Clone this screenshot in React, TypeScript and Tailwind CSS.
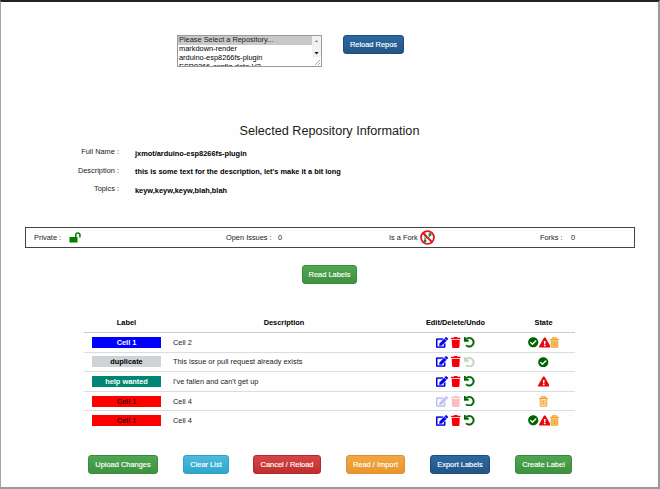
import React from "react";
import { FaEdit, FaTrash, FaUndo, FaCheckCircle, FaExclamationTriangle, FaRegTrashAlt } from "react-icons/fa";

function Btn({ label, className }: { label: string; className: string }) {
  return (
    <button
      className={`h-[19px] shrink-0 rounded-[3px] border text-center text-[7.45px] leading-[17px] whitespace-nowrap text-white [-webkit-text-stroke:0.15px_white] ${className}`}
    >
      {label}
    </button>
  );
}

const green = "bg-linear-to-b from-[#4fa751] to-[#3d913f] border-[#3c8a3e]";
const blue = "bg-linear-to-b from-[#2c69a3] to-[#235586] border-[#1f4c79]";

function NoFork() {
  return (
    <svg viewBox="0 0 30 30" className="h-[15px] w-[15px]" fill="none">
      <path d="M10 21V9M20 8v4c0 4-10 2-10 7" stroke="#15803d" strokeWidth="1.6" />
      <circle cx="10" cy="22" r="3" fill="#15803d" />
      <circle cx="10" cy="9" r="2" fill="#15803d" />
      <circle cx="20" cy="9" r="3" fill="#15803d" />
      <circle cx="15" cy="15" r="12.9" stroke="#e0161b" strokeWidth="3.6" />
      <path d="M6 6l18 18" stroke="#e0161b" strokeWidth="3.6" />
    </svg>
  );
}

type Row = {
  label: string;
  color: string;
  desc: string;
  edit: boolean;
  undo: boolean;
  state: string[];
};

const rows: Row[] = [
  { label: "Cell 1", color: "bg-[#0000ff] text-white", desc: "Cell 2", edit: true, undo: true, state: ["ok", "warn", "faded"] },
  { label: "duplicate", color: "bg-[#cfd3d7] text-black", desc: "This issue or pull request already exists", edit: true, undo: false, state: ["ok"] },
  { label: "help wanted", color: "bg-[#008672] text-white", desc: "I've fallen and can't get up", edit: true, undo: true, state: ["warn"] },
  { label: "Cell 1", color: "bg-[#ff0000] text-[#3c0000]", desc: "Cell 4", edit: false, undo: true, state: ["del"] },
  { label: "Cell 1", color: "bg-[#ff0000] text-[#3c0000]", desc: "Cell 4", edit: true, undo: true, state: ["ok", "warn", "faded"] },
];

function StateIcon({ kind }: { kind: string }) {
  if (kind === "ok") return <FaCheckCircle className="h-[10.5px] w-[10.5px] shrink-0 text-[#006400]" />;
  if (kind === "warn") return <FaExclamationTriangle className="h-[11px] w-[11.5px] shrink-0 text-[#e8050c]" />;
  return (
    <svg viewBox="0 0 18 22" className="h-[11px] w-[9px] shrink-0" fill="none" stroke="#f59a23">
      <path d="M2.5 5h13v15.5h-13z" fill={kind === "faded" ? "#fbc97e" : "#fee6c2"} strokeWidth="1.8" />
      <path d="M0 4.5h18M5.5 3.5V1.5h7v2" strokeWidth="2.2" />
      <path d="M6 8v10M9 8v10M12 8v10" strokeWidth="1.5" />
    </svg>
  );
}

function Info({ name, value }: { name: string; value: string }) {
  return (
    <div className="flex h-[18.5px]">
      <div className="w-[118px] text-right">{name} :</div>
      <div className="ml-[16px] pt-[1.5px] font-bold text-black">{value}</div>
    </div>
  );
}

export default function App() {
  return (
    <div
      className="h-[489px] w-[660px] overflow-hidden border-t-2 border-r-2 border-b-2 border-l border-t-[#222] border-r-[#999] border-b-[#999] border-l-[#a5a5a5] bg-[#fefefe] text-[7.4px] leading-[9px] text-[#1a1a1a]"
      style={{ fontFamily: '"Liberation Sans", Arial, sans-serif' }}
    >
      <div className="flex h-[118px] pt-[33px] pl-[176px]">
        <div className="flex h-[32px] w-[145px] overflow-hidden border border-[#999] bg-white">
          <div className="h-[30px] flex-1 overflow-hidden text-black">
            <div className="h-[9px] bg-[#c8c8c8] pl-px leading-[8px] text-[#222]">Please Select a Repository...</div>
            <div className="h-[9px] pl-px leading-[8px]">markdown-render</div>
            <div className="h-[9px] pl-px leading-[8px]">arduino-esp8266fs-plugin</div>
            <div className="h-[9px] pl-px leading-[8px]">ESP8266-config-data-V2</div>
          </div>
          <div className="flex w-[9px] flex-col items-center bg-[#f1f1f1]">
            <svg viewBox="0 0 9 30" className="h-[30px] w-[9px]">
              <path d="M2.8 6L4.5 4.2 6.2 6z" fill="#777" />
              <path d="M2.3 16h4.4L4.5 18.4z" fill="#222" />
              <path d="M0 21h9v9H0z" fill="#fff" />
              <path d="M3 29l5-5M6 29l2-2" stroke="#888" strokeWidth=".7" />
            </svg>
          </div>
        </div>
        <Btn label="Reload Repos" className={`ml-[21px] w-[61px] ${blue}`} />
      </div>

      <h1 className="h-[27px] text-center text-[12.65px] leading-[22px] text-[#1a1a1a]">Selected Repository Information</h1>

      <section className="h-[80px]">
        <Info name="Full Name" value="jxmot/arduino-esp8266fs-plugin" />
        <Info name="Description" value="this is some text for the description, let's make it a bit long" />
        <Info name="Topics" value="keyw,keyw,keyw,blah,blah" />
      </section>

      <section className="ml-[24px] flex h-[21px] w-[610px] items-center border border-[#444] pl-[8px]">
        <div className="flex w-[192px] items-center">
          <span className="w-[35px]">Private :</span>
          <svg viewBox="0 0 24 22" className="h-[11px] w-[12px]">
            <path d="M1 10h16v11H1z" fill="#008000" />
            <path d="M13.5 11V6a4.2 4.2 0 0 1 8.4 0v5" fill="none" stroke="#008000" strokeWidth="3" />
          </svg>
        </div>
        <div className="flex w-[163px]"><span className="w-[52px]">Open Issues :</span><span>0</span></div>
        <div className="flex w-[151px] items-center"><span className="w-[31px]">Is a Fork</span><NoFork /></div>
        <div className="flex"><span className="w-[31px]">Forks :</span><span>0</span></div>
      </section>

      <div className="flex h-[61px] justify-center pt-[17px]">
        <Btn label="Read Labels" className={`w-[55px] ${green}`} />
      </div>

      <section className="ml-[83px] w-[491px]">
        <div className="flex h-[24px] items-center border-b border-[#ccc] pt-[3px] font-bold text-black">
          <div className="w-[85px] text-center">Label</div>
          <div className="w-[230px] text-center">Description</div>
          <div className="w-[113px] text-center">Edit/Delete/Undo</div>
          <div className="w-[63px] text-center">State</div>
        </div>
        {rows.map((r, i) => (
          <div key={i} className="flex h-[19.6px] items-center border-b border-[#ddd] last:border-transparent">
            <div className={`ml-[8px] h-[11px] w-[69px] text-center leading-[11px] font-bold ${r.color}`}>{r.label}</div>
            <div className="w-[263px] pl-[12px]">{r.desc}</div>
            <div className="flex w-[88px] items-center pl-[12px]">
              <FaEdit className={`h-[11px] w-[12px] stroke-[#0000e6] stroke-[14px] text-[#0000e6] ${r.edit ? "" : "opacity-25"}`} />
              <FaTrash className={`ml-[3px] h-[11px] w-[9.5px] text-[#f5000a] ${r.edit ? "" : "opacity-25"}`} />
              <FaUndo className={`ml-[3.5px] h-[10.5px] w-[10.5px] stroke-[#006400] stroke-[22px] text-[#006400] ${r.undo ? "" : "opacity-25"}`} />
            </div>
            <div className="flex w-[63px] items-center justify-center">
              {r.state.map((s) => <StateIcon key={s} kind={s} />)}
            </div>
          </div>
        ))}
      </section>

      <div className="mt-[24px] ml-[87px] flex">
        <Btn label="Upload Changes" className={`w-[70px] ${green}`} />
        <Btn label="Clear List" className="ml-[25px] w-[46px] border-[#2f9fc4] bg-linear-to-b from-[#4dbbdc] to-[#2ea6cc]" />
        <Btn label="Cancel / Reload" className="ml-[24px] w-[68px] border-[#b02a2a] bg-linear-to-b from-[#d64545] to-[#bd2f2f]" />
        <Btn label="Read / Import" className="ml-[25px] w-[59px] border-[#dd9030] bg-linear-to-b from-[#f2a744] to-[#ea952a]" />
        <Btn label="Export Labels" className={`ml-[25px] w-[60px] ${blue}`} />
        <Btn label="Create Label" className={`ml-[25px] w-[57px] ${green}`} />
      </div>
    </div>
  );
}
